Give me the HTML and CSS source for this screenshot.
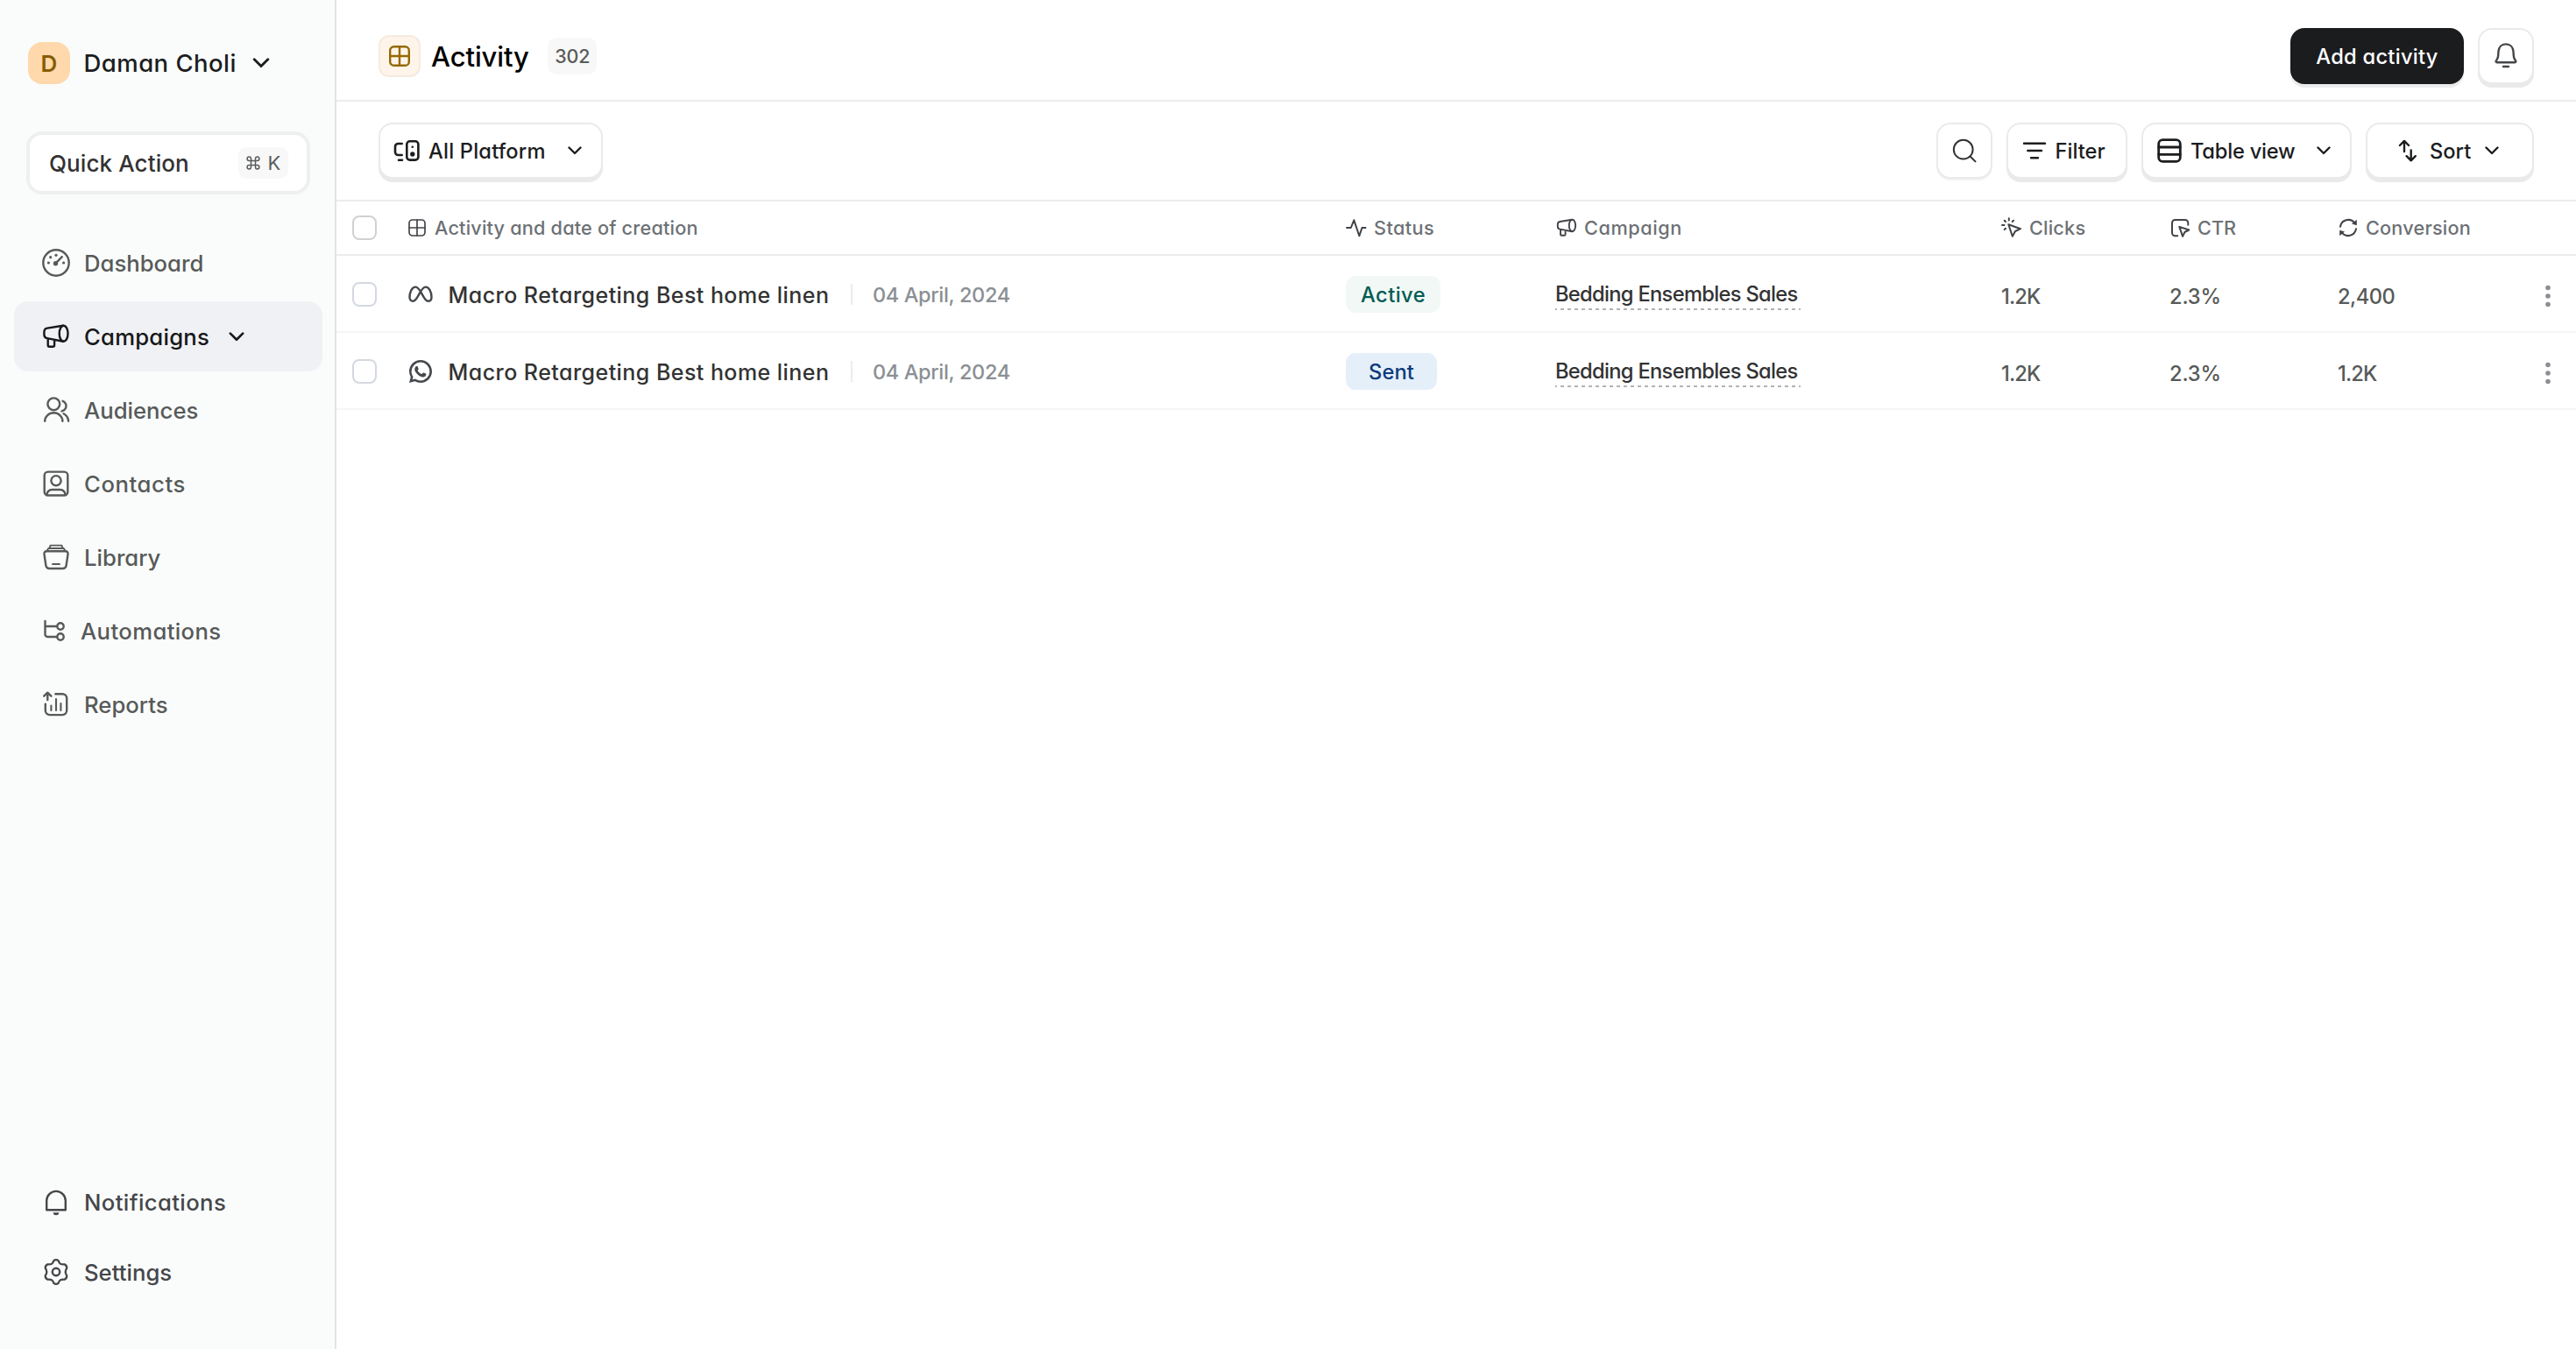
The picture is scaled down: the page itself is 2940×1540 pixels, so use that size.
FILE: index.html
```html
<!DOCTYPE html>
<html lang="en">
<head>
<meta charset="utf-8">
<title>Activity</title>
<link rel="stylesheet" href="styles.css">
</head>
<body>
<svg class="sprite" aria-hidden="true">
  <symbol id="megaphone" viewBox="0 0 32 32"><ellipse cx="24.6" cy="12.7" rx="4.9" ry="9"/><path d="M24 3.7 6 6.6C3.4 7 2.4 8.5 2.4 11v3c0 2.4 1.2 3.7 3.3 4.1L24 21.7M6.7 18.5V26a1.7 1.7 0 0 0 1.7 1.7h4a1.7 1.7 0 0 0 1.7-1.7v-6"/></symbol>
  <symbol id="grid" viewBox="0 0 24 24"><rect x="1.2" y="1.2" width="21.6" height="21.6" rx="4.4"/><path d="M12 1.2v21.6M1.2 12h21.6"/></symbol>
  <symbol id="chevron" viewBox="0 0 16 10"><path d="M1.5 1.5 8 8l6.500-6.500"/></symbol>
  <symbol id="kebab" viewBox="0 0 6 26"><circle cx="3" cy="3.500" r="2.800"/><circle cx="3" cy="13" r="2.800"/><circle cx="3" cy="22.500" r="2.800"/></symbol>
</svg>
<div class="app">
  <aside class="sidebar">
    <div class="user"><span class="avatar">D</span><span class="user-name">Daman Choli</span><svg class="icon chev-lg"><use href="#chevron"/></svg></div>
    <div class="quick"><span class="quick-label">Quick Action</span><span class="kbd"><svg class="icon" width="16" height="16" viewBox="0 0 16 16"><path d="M5.500 5.500V3.300a2.200 2.200 0 1 0-2.200 2.200h9.400a2.200 2.200 0 1 0-2.200-2.200v9.400a2.200 2.200 0 1 0 2.200-2.200H3.300a2.200 2.200 0 1 0 2.200 2.200z"/></svg><span>K</span></span></div>
    <nav class="nav">
      <a class="item"><svg class="icon" width="32" height="32"><circle cx="16" cy="16" r="14.700"/><path d="M15.500 16.700 22.800 9.200"/><g class="solid"><circle cx="7.400" cy="16" r="1.600"/><circle cx="9.700" cy="9.700" r="1.600"/><circle cx="16" cy="7.300" r="1.600"/><circle cx="24.600" cy="16" r="1.600"/><circle cx="15.500" cy="16.700" r="2.700"/></g></svg><span>Dashboard</span></a>
      <a class="item active"><svg class="icon" width="32" height="32"><use href="#megaphone"/></svg><span class="track-1">Campaigns</span><svg class="icon chev-md"><use href="#chevron"/></svg></a>
      <a class="item"><svg class="icon" width="32" height="32"><circle cx="13.300" cy="9.300" r="6.900"/><path d="M3.200 28.700a10.100 9.400 0 0 1 20.200 0M23.600 5.800c5.300 2.400 5.400 9.600-1.100 11.600M24.600 20.300c3.300 1.700 5.200 4.700 5.500 8.400"/></svg><span>Audiences</span></a>
      <a class="item"><svg class="icon" width="32" height="32"><rect x="2.700" y="2.600" width="26.600" height="26.900" rx="4"/><circle cx="16" cy="12.700" r="5.600"/><path d="M5.500 28.700c.5-3.700 2.500-5.700 6-5.700h9c3.500 0 5.500 2 6 5.700"/></svg><span class="track-3">Contacts</span></a>
      <a class="item"><svg class="icon" width="32" height="32"><path d="M5.500 9.300h21c2.400 0 3.300 1.500 3 3.600l-1.900 12.600c-.4 2.300-1.500 3.500-4 3.500H8.400c-2.500 0-3.600-1.200-4-3.500L2.500 12.900c-.3-2.100.6-3.600 3-3.600z"/><path d="M5.600 8.800 7.300 6h17.400l1.700 2.800M8.300 5.800 9.600 2.600h12.800l1.300 3.200M12 24h8" stroke-width="1.900"/></svg><span>Library</span></a>
      <a class="item"><svg class="icon" width="28" height="32"><path d="M3.500 5v15.300A2.700 2.700 0 0 0 6.200 23H17M3.500 11H17"/><circle cx="21" cy="11" r="3.700"/><circle cx="21" cy="23" r="3.700"/></svg><span class="track-2">Automations</span></a>
      <a class="item"><svg class="icon" width="32" height="32"><path d="M6.300 11V3M2.200 6.700l4.100-4 4.100 4M15.300 4.200h7.900a5 5 0 0 1 5 5v13.900a5 5 0 0 1-5 5H8.800a5 5 0 0 1-5-5v-7.500"/><path d="M10.400 17.500V23M16 10v13M21.400 15v8" stroke-width="2.100"/></svg><span>Reports</span></a>
    </nav>
    <nav class="nav nav-bottom">
      <a class="item"><svg class="icon" width="32" height="32"><path d="M5.200 25.300V14.700a10.800 10.800 0 0 1 21.600 0v10.600z"/><path class="solid" d="M12.700 28.300h6.600a3.300 3 0 0 1-6.600 0z"/></svg><span class="track-2">Notifications</span></a>
      <a class="item"><svg class="icon" width="32" height="32"><circle cx="16" cy="16" r="4.200"/><path transform="translate(.8 .48) scale(.95 .97)" d="M13.400 2.650Q16 .8 18.600 2.650C20.200 6.200 20.800 7.500 26.260 7.080Q29.200 8.600 28.860 11.570C26.600 14.700 26.600 17.300 28.860 20.430Q29.200 23.400 26.260 24.920C20.800 24.500 20.200 25.800 18.600 29.350Q16 31.200 13.400 29.350C11.800 25.800 11.200 24.500 5.740 24.920Q2.800 23.400 3.140 20.430C5.400 17.300 5.400 14.700 3.140 11.570Q2.800 8.600 5.740 7.080C11.200 7.500 11.800 6.200 13.400 2.650z"/></svg><span>Settings</span></a>
    </nav>
  </aside>
  <main class="main">
    <header class="header">
      <span class="title-icon"><svg class="icon" width="24" height="24"><use href="#grid"/></svg></span>
      <h1 class="title">Activity</h1><span class="count">302</span>
      <div class="push group">
        <button class="btn-dark">Add activity</button>
        <button class="btn square"><svg class="icon" width="32" height="32"><path d="M16 2.400c-5 0-8.200 3.500-8.500 8.200l-.3 4.700c-.1 1.500-.4 2.700-1.100 4l-1.300 2.300c-.5.900 0 1.600.9 1.600h20.600c.9 0 1.400-.7.900-1.600l-1.300-2.300c-.7-1.300-1-2.500-1.100-4l-.3-4.700c-.3-4.700-3.500-8.200-8.500-8.200zM13 28h6"/></svg></button>
      </div>
    </header>
    <div class="toolbar">
      <button class="btn platform"><svg class="icon" width="32" height="32"><path d="M10.700 8H6.500A3.500 3.500 0 0 0 3 11.500v6A3.500 3.500 0 0 0 6.500 21h4.200M7 26.700h4"/><rect x="16.300" y="5.300" width="13.100" height="21.300" rx="3.400"/><g class="solid"><circle cx="22.800" cy="11.800" r="1.300"/><circle cx="22.800" cy="20" r="2.700"/></g></svg><span>All Platform</span><svg class="icon chev push"><use href="#chevron"/></svg></button>
      <div class="push group">
        <button class="btn square search"><svg class="icon" width="28" height="28"><circle cx="12.700" cy="12.700" r="10.900"/><path d="m20.500 20.500 6 5.900"/></svg></button>
        <button class="btn filter"><svg class="icon" width="28" height="28"><path d="M2 5.800h24M6.300 14h15.700M10 22.200h8"/></svg><span>Filter</span></button>
        <button class="btn view"><svg class="icon" width="28" height="28"><rect x="1.700" y="1.700" width="24.600" height="24.600" rx="4.600"/><path d="M1.700 10h24.600M1.700 18.300h24.600"/></svg><span>Table view</span><svg class="icon chev push"><use href="#chevron"/></svg></button>
        <button class="btn sort"><svg class="icon" width="24" height="28"><path d="M8 15V3M2.900 8 8 2.900 13.100 8M15.700 13.500v11.700M10.600 20.200l5.100 5.100 5.100-5.100"/></svg><span>Sort</span><svg class="icon chev"><use href="#chevron"/></svg></button>
      </div>
    </div>
    <section class="table">
      <div class="row head">
        <span class="check"></span>
        <span class="col"><svg class="icon" width="24" height="24" viewBox="-2.400 -2.400 28.800 28.800"><use href="#grid" width="24" height="24"/></svg><span>Activity and date of creation</span></span>
        <span class="col"><svg class="icon" width="24" height="24"><path d="M1 12h4.800L9.300 3.300l6 18L18.500 12h4"/></svg><span class="track-2">Status</span></span>
        <span class="col"><svg class="icon mega" width="24" height="24"><use href="#megaphone"/></svg><span class="track-3">Campaign</span></span>
        <span class="col"><svg class="icon" width="24" height="24"><path d="M8.300 8.300 22 13.200l-6 2.800-3.200 5.800zM8.800 1.300v2.300M1 8.900h2.500M3.700 3.700l1.300 1.300M14 3.700l-1.300 1.300M3.700 14l1.300-1.300"/></svg><span>Clicks</span></span>
        <span class="col"><svg class="icon" width="24" height="24"><path d="M9.300 21.300H6.500A3.500 3.500 0 0 1 3 17.800V6.500A3.500 3.500 0 0 1 6.500 3h11.300a3.500 3.500 0 0 1 3.500 3.500v2.200M11.300 10.900l11 3.600-4.900 2.500-2.300 4.900z"/></svg><span class="track-0">CTR</span></span>
        <span class="col"><svg class="icon" width="24" height="24"><path d="M3 10.800a9.100 9.100 0 0 1 16.300-4.200M21 13.200A9.100 9.100 0 0 1 4.700 17.400"/><path class="solid" d="M21.800 2.800v6.400l-5.800-1.600zM2.200 21.200v-6.400L8 16.400z"/></svg><span>Conversion</span></span>
      </div>
      <div class="row">
        <span class="check"></span>
        <span class="name"><svg class="icon" width="28" height="22" viewBox="0 -1 28 22"><path d="M1.500 13.200C1.500 7 4.400 1.600 8.200 1.600c6.300 0 8.800 16.200 14.300 16.200 2.800 0 4-2 4-4.600 0-6.200-2.900-11.600-6.700-11.600C13.500 1.600 11 17.800 5.500 17.800c-2.800 0-4-2-4-4.600z"/></svg><span class="label">Macro Retargeting Best home linen</span><span class="date">04 April, 2024</span></span>
        <span><span class="pill pill-active">Active</span></span>
        <span><a class="link">Bedding Ensembles Sales</a></span>
        <span class="num num-k">1.2K</span><span class="num">2.3%</span><span class="num num-c">2,400</span>
        <svg class="kebab"><use href="#kebab"/></svg>
      </div>
      <div class="row">
        <span class="check"></span>
        <span class="name"><svg class="icon whatsapp" width="28" height="26" viewBox="1.230 2 21.540 20"><path d="M7.254 18.494l.724.423A8 8 0 0 0 12 20a8 8 0 1 0-8-8c0 1.436.378 2.813 1.085 4.024l.422.724-.653 2.401zM2.005 22l1.352-4.969A9.960 9.960 0 0 1 2 12C2 6.477 6.478 2 12 2s10 4.477 10 10-4.477 10-10 10a9.950 9.950 0 0 1-5.030-1.355z"/><path d="M8.400 7.300h.5c.2 0 .4.100.5.300l.8 2c.1.200 0 .4-.1.600-.2.300-.4.500-.6.800-.1.100-.1.300 0 .4.900 1.400 1.700 2.200 3.200 2.800.3.100.5.100.7-.1l.8-.9c.1-.1.300-.1.500-.1l2 .9c.1.100.2.200.2.300.1 1.200-.6 2.200-1.800 2.600-1.100.3-2 .1-3.100-.4-1.700-.8-3.100-2.100-4.100-3.500-.7-1-1.100-1.800-1.100-2.900.1-1.200.6-2.700 1.600-2.800z"/></svg><span class="label">Macro Retargeting Best home linen</span><span class="date">04 April, 2024</span></span>
        <span><span class="pill pill-sent">Sent</span></span>
        <span><a class="link">Bedding Ensembles Sales</a></span>
        <span class="num num-k">1.2K</span><span class="num">2.3%</span><span class="num num-k">1.2K</span>
        <svg class="kebab"><use href="#kebab"/></svg>
      </div>
    </section>
  </main>
</div>
</body>
</html>
```
FILE: styles.css
```css
* { box-sizing: border-box; }
body {
  margin: 0;
  font-family: Inter, "Liberation Sans", sans-serif;
  font-weight: 500;
  font-feature-settings: "cv11";
  color: #1c1d1f;
  background: #fff;
}
.app { display: flex; height: 1540px; }
.sprite { position: absolute; width: 0; height: 0; }
.icon { display: block; flex: none; fill: none; stroke: currentColor; stroke-width: 2.4; stroke-linecap: round; stroke-linejoin: round; }
.solid { fill: currentColor; stroke: none; }
.chev { width: 16px; height: 10px; }
.chev-md { width: 18px; height: 11px; }
.chev-lg { width: 20px; height: 12px; }
.push { margin-left: auto; }
.group { display: flex; gap: 16px; }
.track-0 { letter-spacing: 0; }
.track-1 { letter-spacing: .23px; }
.track-2 { letter-spacing: .38px; }
.track-3 { letter-spacing: .58px; }

/* Sidebar */
.sidebar { display: flex; flex-direction: column; flex: none; width: 384px; padding-bottom: 48px; background: #fafcfb; border-right: 2px solid #e2e4e4; }
.user { display: flex; align-items: center; height: 48px; margin: 48px 0 0 32px; font-size: 27.5px; letter-spacing: .46px; }
.avatar { display: flex; align-items: center; justify-content: center; width: 48px; height: 48px; margin-right: 15.5px; border-radius: 16px; background: #ffd8ab; color: #855c00; font-size: 26px; font-weight: 600; }
.user-name { margin-right: 18px; }
.quick { display: flex; align-items: center; justify-content: space-between; width: 324px; height: 72px; margin: 54px 0 38px 30px; padding: 0 22px; border: 4px solid #eef0f0; border-radius: 18px; background: #fff; color: #333; font-size: 26px; }
.quick-label { letter-spacing: .1px; }
.kbd { display: flex; align-items: center; justify-content: center; gap: 9px; width: 57px; height: 36px; margin-right: -1px; border-radius: 9px; background: #f8f8f8; color: #5a5c5c; font-size: 22px; font-weight: 400; }
.kbd .icon { stroke-width: 1.5; }
.nav { display: flex; flex-direction: column; gap: 4px; padding: 0 14px 0 16px; font-size: 25.7px; color: #575a59; }
.item { display: flex; align-items: center; gap: 16px; height: 80px; padding-left: 32px; border-radius: 16px; }
.active { background: #f0f1f4; color: #17181a; }
.active .chev-md { margin-left: 6px; }
.nav-bottom { gap: 0; margin-top: auto; color: #45474a; }

/* Header */
.main { flex: 1; min-width: 0; }
.header { display: flex; align-items: center; height: 116px; padding: 12px 48px 0; border-bottom: 2px solid #ececec; }
.title-icon { display: flex; align-items: center; justify-content: center; width: 48px; height: 48px; border: 2px solid #f6eadf; border-radius: 12px; background: #fff4ea; color: #946a00; }
.header .title-icon { margin-top: 2px; }
.title { margin: 3px 0 0 12px; font-size: 31px; font-weight: 500; letter-spacing: -.1px; color: #000; }
.count { display: flex; align-items: center; justify-content: center; width: 56px; height: 42px; margin: 2px 0 0 21.5px; border-radius: 11px; background: #f8f8f8; color: #5a5c5c; font-size: 21.5px; letter-spacing: -.18px; }
.header .group { margin-top: 2px; }
button { font: inherit; font-feature-settings: inherit; color: inherit; }
.btn-dark { width: 198px; height: 64px; padding: 1px 0 0; border: 0; border-radius: 16px; background: #1b1c1e; color: #fff; font-size: 23.7px; letter-spacing: .26px; box-shadow: 0 4px 0 #ececec; }
.btn { display: flex; align-items: center; height: 64px; padding: 0; border: 2px solid #eaeaea; border-radius: 16px; background: #fff; box-shadow: 0 4px 0 #eaeaea; font-size: 23.7px; }
.square { justify-content: center; width: 64px; color: #45474a; }

/* Toolbar */
.toolbar { display: flex; height: 114px; padding: 24px 48px 0; border-bottom: 2px solid #ececec; }
.platform { width: 256px; padding: 0 22px 0 14px; gap: 9px; letter-spacing: .19px; }
.platform .icon:not(.chev) { stroke-width: 2.6; }
.search { box-shadow: 0 2px 0 #f2f2f2; color: #333; }
.search .icon { stroke-width: 2; }
.filter { width: 138px; padding-left: 16px; gap: 9.5px; }
.view { width: 240px; padding: 0 22px 0 16px; gap: 10px; letter-spacing: -.24px; }
.view .icon:not(.chev) { stroke-width: 2.8; }
.sort { width: 192px; padding-left: 34px; gap: 13px; }
.sort .chev { margin-left: 3px; }

/* Table */
.row { display: grid; grid-template-columns: 62px 1072px 240px 508px 192px 192px 233px 1fr; align-items: center; height: 88px; padding: 2px 0 0 18px; border-bottom: 2px solid #f5f5f5; }
.head { height: 62px; padding-top: 0; border-bottom-color: #ececec; color: #6d7175; font-size: 21.7px; letter-spacing: .18px; }
.check { width: 28px; height: 28px; border: 2px solid #d4d8e0; border-radius: 8px; background: #fff; }
.head .check { border-color: #d0d1d3; }
.col { display: flex; align-items: center; gap: 8px; }
.col .icon { color: #404347; stroke-width: 2; }
.col .mega { stroke-width: 2.5; }
.name { display: flex; align-items: center; padding-left: 2px; white-space: nowrap; }
.name .icon { color: #45494d; }
.name .whatsapp { fill: currentColor; stroke: none; }
.label { margin: 2px 0 0 17.5px; color: #333; font-size: 25px; letter-spacing: .45px; }
.date { display: flex; align-items: center; height: 24px; margin-left: 24.5px; padding-left: 23px; border-left: 2px solid #ececec; color: #8b8f94; font-size: 23.5px; letter-spacing: -.34px; }
.pill { display: flex; align-items: center; justify-content: center; height: 42px; border-radius: 11px; font-size: 23.7px; }
.pill-active { width: 108px; background: #f2f8f6; color: #005c53; letter-spacing: .45px; }
.pill-sent { width: 104px; background: #e5effa; color: #0c3c7c; letter-spacing: .1px; }
.link { display: block; width: 280px; height: 36px; margin-left: -1px; line-height: 36px; color: #333; font-size: 23.7px; letter-spacing: -.69px; white-space: nowrap; background: repeating-linear-gradient(90deg, #b0b2b6 0 2px, transparent 2px 6px, #b0b2b6 6px 8px) 0 100% / 100% 2px no-repeat; }
.num { padding-top: 4px; color: #575a59; font-size: 23.7px; letter-spacing: -.18px; }
.num-k { letter-spacing: -.87px; }
.num-c { letter-spacing: -.53px; }
.kebab { width: 6px; height: 26px; margin: 4px 0 0 4px; fill: #8b8f94; }
```
